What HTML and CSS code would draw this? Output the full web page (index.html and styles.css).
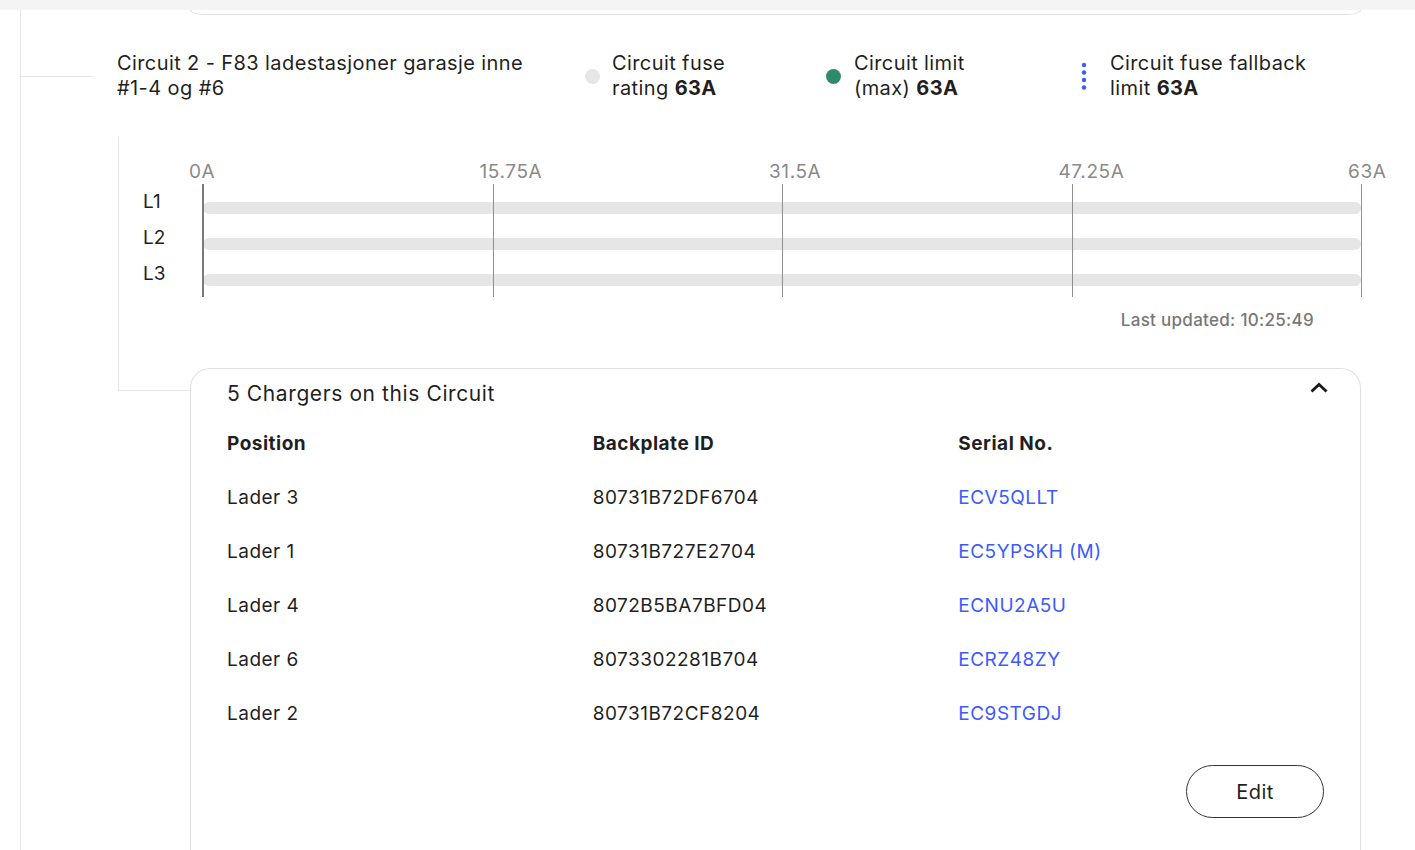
FILE: index.html
```html
<!DOCTYPE html>
<html lang="en">

<head>
    <meta charset="UTF-8">
    <meta name="viewport" content="width=device-width, initial-scale=1.0">
    <title>Circuit 2</title>
    <link rel="stylesheet" href="styles.css">
</head>

<body>
    <div class="topbar"></div>

    <div class="tree">
        <div class="prev-card"></div>

        <div class="circuit">
            <div class="circuit-head">
                <div class="branch"></div>
                <div class="circuit-name">Circuit 2 - F83 ladestasjoner garasje inne <span class="nowrap">#1-4</span> og #6</div>
                <div class="legend">
                    <div class="legend-item legend-fuse">
                        <span class="dot dot-grey"></span>
                        <span class="legend-text">Circuit fuse<br>rating <b>63A</b></span>
                    </div>
                    <div class="legend-item legend-limit">
                        <span class="dot dot-green"></span>
                        <span class="legend-text">Circuit limit<br>(max) <b>63A</b></span>
                    </div>
                    <div class="legend-item legend-fallback">
                        <span class="dots-icon">
                            <svg width="6" height="28" viewBox="0 0 6 28">
                                <circle cx="3" cy="3" r="2.2" fill="#3d5afe"/>
                                <circle cx="3" cy="10.5" r="2.2" fill="#3d5afe"/>
                                <circle cx="3" cy="18" r="2.2" fill="#3d5afe"/>
                                <circle cx="3" cy="25.5" r="2.2" fill="#3d5afe"/>
                            </svg>
                        </span>
                        <span class="legend-text">Circuit fuse fallback<br>limit <b>63A</b></span>
                    </div>
                </div>
            </div>

            <div class="circuit-body">
                <div class="chart">
                    <div class="ticks">
                        <div class="tick tick-zero" style="left: 0%;"><span>0A</span></div>
                        <div class="tick" style="left: 25%;"><span>15.75A</span></div>
                        <div class="tick" style="left: 50%;"><span>31.5A</span></div>
                        <div class="tick" style="left: 75%;"><span>47.25A</span></div>
                        <div class="tick" style="left: 100%;"><span>63A</span></div>
                    </div>
                    <div class="phase">
                        <div class="phase-name">L1</div>
                        <div class="bar"></div>
                    </div>
                    <div class="phase">
                        <div class="phase-name">L2</div>
                        <div class="bar"></div>
                    </div>
                    <div class="phase">
                        <div class="phase-name">L3</div>
                        <div class="bar"></div>
                    </div>
                </div>
                <div class="updated">Last updated: 10:25:49</div>
            </div>

            <div class="chargers-row">
                <div class="branch-end"></div>
                <div class="chargers">
                    <div class="chargers-head">
                        <h2>5 Chargers on this Circuit</h2>
                        <span class="toggle">
                            <svg width="24" height="24" viewBox="0 0 24 24">
                                <path d="M4.5 16.5 L12 9.5 L19.5 16.5" fill="none" stroke="#1a1a1a" stroke-width="2.8"/>
                            </svg>
                        </span>
                    </div>
                    <table class="chargers-table">
                        <thead>
                            <tr>
                                <th>Position</th>
                                <th>Backplate ID</th>
                                <th>Serial No.</th>
                            </tr>
                        </thead>
                        <tbody>
                            <tr>
                                <td>Lader 3</td>
                                <td>80731B72DF6704</td>
                                <td><a href="#">ECV5QLLT</a></td>
                            </tr>
                            <tr>
                                <td>Lader 1</td>
                                <td>80731B727E2704</td>
                                <td><a href="#">EC5YPSKH (M)</a></td>
                            </tr>
                            <tr>
                                <td>Lader 4</td>
                                <td>8072B5BA7BFD04</td>
                                <td><a href="#">ECNU2A5U</a></td>
                            </tr>
                            <tr>
                                <td>Lader 6</td>
                                <td>8073302281B704</td>
                                <td><a href="#">ECRZ48ZY</a></td>
                            </tr>
                            <tr>
                                <td>Lader 2</td>
                                <td>80731B72CF8204</td>
                                <td><a href="#">EC9STGDJ</a></td>
                            </tr>
                        </tbody>
                    </table>
                    <div class="actions">
                        <button class="edit">Edit</button>
                    </div>
                </div>
            </div>
        </div>
    </div>
</body>

</html>
```

FILE: styles.css
```css
* {
    margin: 0;
    padding: 0;
    box-sizing: border-box;
}

body {
    font-family: Inter, "Noto Sans", sans-serif;
    color: #1f1f1f;
    background-color: #fff;
}

.topbar {
    height: 10px;
    background-color: #f4f4f4;
}

.tree {
    margin-left: 20px;
    border-left: 1px solid #e6e6e6;
}

.prev-card {
    margin-left: 169px;
    width: 1171px;
    height: 5px;
    border: 1px solid #e2e2e2;
    border-top: none;
    border-radius: 0 0 14px 14px / 0 0 5px 5px;
}

/* circuit header */

.circuit-head {
    display: flex;
    align-items: center;
    margin-top: 36px;
}

.branch {
    width: 72px;
    height: 1px;
    margin-right: 24px;
    background-color: #e6e6e6;
    flex-shrink: 0;
}

.circuit-name {
    width: 468px;
    padding-right: 40px;
    font-size: 20px;
    line-height: 25px;
    letter-spacing: 0.4px;
    flex-shrink: 0;
}

.nowrap {
    white-space: nowrap;
}

.legend {
    display: flex;
    align-items: center;
}

.legend-item {
    display: flex;
    align-items: center;
    font-size: 20px;
    line-height: 25px;
    letter-spacing: 0.4px;
}

.legend-fuse {
    width: 241px;
}

.legend-limit {
    width: 250px;
}

.legend b {
    font-weight: 700;
}

.dot {
    width: 15px;
    height: 15px;
    border-radius: 50%;
    margin-right: 12px;
    flex-shrink: 0;
}

.dot-grey {
    background-color: #e6e6e6;
}

.dot-green {
    background-color: #2f8a6b;
    margin-right: 13px;
}

.dots-icon {
    display: flex;
    justify-content: center;
    width: 15px;
    margin-right: 19px;
}

/* load chart */

.circuit-body {
    margin-left: 97px;
    margin-top: 36px;
    padding: 47px 0 38px 24px;
    border-left: 1px solid #e6e6e6;
}

.chart {
    position: relative;
    width: 1218px;
    padding-bottom: 5px;
}

.ticks {
    position: absolute;
    top: 0;
    bottom: 0;
    left: 60px;
    width: 1158px;
}

.tick {
    position: absolute;
    top: 0;
    bottom: 0;
    width: 1px;
    background-color: #8f8f8f;
    z-index: 1;
}

.tick-zero {
    width: 2px;
    margin-left: -1px;
    background-color: #7a7a7a;
}

.tick span {
    position: absolute;
    top: -23px;
    left: -13px;
    font-size: 19px;
    line-height: 22px;
    letter-spacing: 0.6px;
    color: #8a8a8a;
    white-space: nowrap;
}

.phase {
    display: flex;
    height: 36px;
}

.phase-name {
    width: 60px;
    font-size: 19px;
    line-height: 36px;
    margin-top: -18px;
    padding-top: 18px;
    height: 36px;
    box-sizing: content-box;
}

.bar {
    width: 1158px;
    height: 12px;
    margin-top: 18px;
    border-radius: 6px;
    background-color: #e6e6e6;
}

.updated {
    width: 1218px;
    margin-top: 13px;
    padding-right: 47px;
    text-align: right;
    font-size: 17px;
    line-height: 20px;
    letter-spacing: 0.3px;
    font-weight: 500;
    color: #777;
}

/* chargers */

.chargers-row {
    display: flex;
    margin-left: 97px;
}

.branch-end {
    width: 72px;
    height: 23px;
    border-left: 1px solid #e6e6e6;
    border-bottom: 1px solid #e6e6e6;
    flex-shrink: 0;
}

.chargers {
    width: 1171px;
    padding: 6px 36px 60px;
    border: 1px solid #e0e0e0;
    border-bottom: none;
    border-radius: 20px 20px 0 0;
}

.chargers-head {
    display: flex;
    justify-content: space-between;
    align-items: flex-start;
}

.chargers-head h2 {
    padding-top: 6px;
    font-size: 21px;
    line-height: 26px;
    letter-spacing: 0.6px;
    font-weight: 400;
}

.toggle {
    display: block;
    width: 24px;
    height: 24px;
    margin-right: -7px;
}

.chargers-table {
    width: 100%;
    margin-top: 9px;
    border-collapse: collapse;
    table-layout: fixed;
}

.chargers-table th,
.chargers-table td {
    height: 54px;
    text-align: left;
    vertical-align: middle;
    font-size: 19px;
    letter-spacing: 0.5px;
}

.chargers-table th {
    font-weight: 700;
}

.chargers-table td {
    font-weight: 400;
}

.chargers-table a {
    color: #3d5afe;
    text-decoration: none;
}

.actions {
    display: flex;
    justify-content: flex-end;
    margin-top: 25px;
}

.edit {
    width: 138px;
    height: 53px;
    border: 1px solid #333;
    border-radius: 27px;
    background-color: #fff;
    font-family: Inter, "Noto Sans", sans-serif;
    font-size: 20px;
    letter-spacing: 0.4px;
    color: #1f1f1f;
}
```
